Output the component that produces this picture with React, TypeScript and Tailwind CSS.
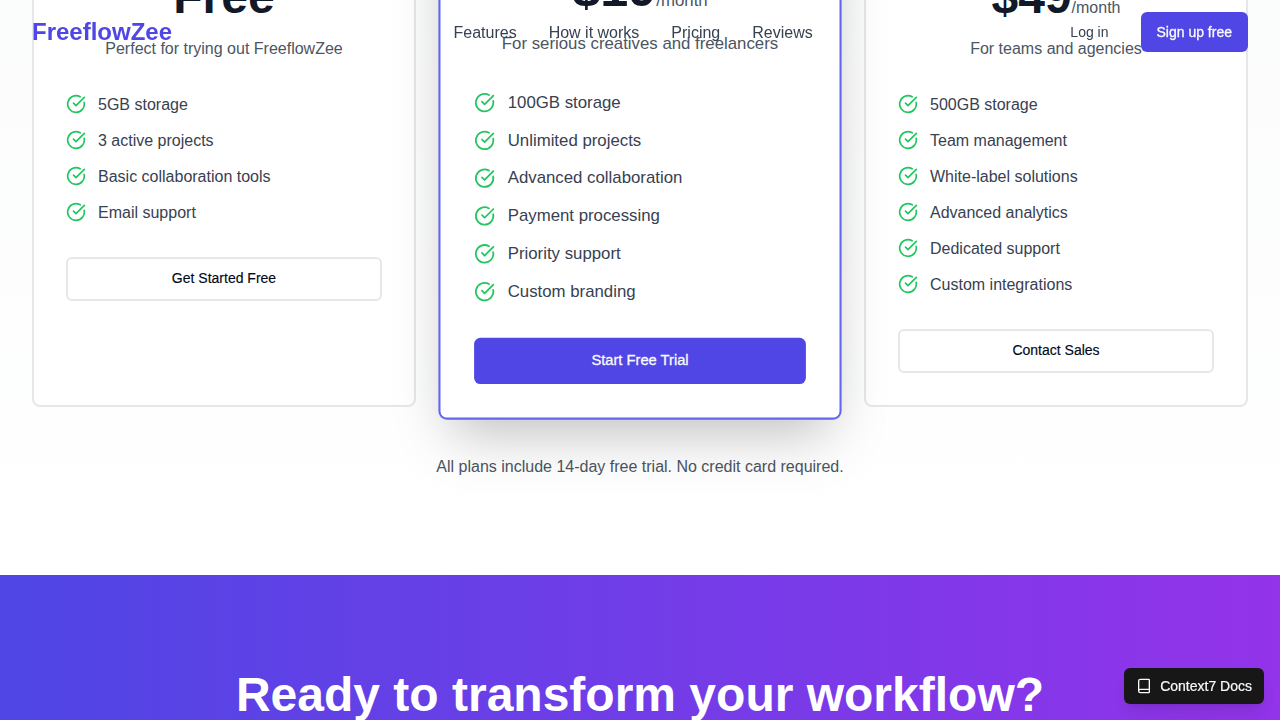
import React from "react";

type Plan = {
  name: string;
  price: string;
  period?: string;
  description: string;
  features: string[];
  cta: string;
  popular?: boolean;
};

const plans: Plan[] = [
  {
    name: "Starter",
    price: "Free",
    description: "Perfect for trying out FreeflowZee",
    features: ["5GB storage", "3 active projects", "Basic collaboration tools", "Email support"],
    cta: "Get Started Free",
  },
  {
    name: "Professional",
    price: "$19",
    period: "/month",
    description: "For serious creatives and freelancers",
    features: [
      "100GB storage",
      "Unlimited projects",
      "Advanced collaboration",
      "Payment processing",
      "Priority support",
      "Custom branding",
    ],
    cta: "Start Free Trial",
    popular: true,
  },
  {
    name: "Agency",
    price: "$49",
    period: "/month",
    description: "For teams and agencies",
    features: [
      "500GB storage",
      "Team management",
      "White-label solutions",
      "Advanced analytics",
      "Dedicated support",
      "Custom integrations",
    ],
    cta: "Contact Sales",
  },
];

function CheckIcon() {
  return (
    <svg
      className="mr-3 mb-px h-5 w-5 shrink-0 text-[#22c55e]"
      viewBox="0 0 24 24"
      fill="none"
      stroke="currentColor"
      strokeWidth="2"
      strokeLinecap="round"
      strokeLinejoin="round"
    >
      <path d="M21.801 10A10 10 0 1 1 17 3.335" />
      <path d="m9 11 3 3L22 4" />
    </svg>
  );
}

function BookIcon() {
  return (
    <svg
      className="h-4 w-4 shrink-0"
      viewBox="0 0 24 24"
      fill="none"
      stroke="currentColor"
      strokeWidth="2"
      strokeLinecap="round"
      strokeLinejoin="round"
    >
      <path d="M4 19.5v-15A2.5 2.5 0 0 1 6.5 2H19a1 1 0 0 1 1 1v18a1 1 0 0 1-1 1H6.5a1 1 0 0 1 0-5H20" />
    </svg>
  );
}

function PlanCard({ plan }: { plan: Plan }) {
  return (
    <div
      className={
        plan.popular
          ? "z-10 scale-105 rounded-lg border-2 border-[#6366f1] bg-white p-8 shadow-2xl"
          : "rounded-lg border-2 border-[#e5e7eb] bg-white p-8"
      }
    >
      <div className="text-center">
        <h3 className="text-2xl leading-none font-semibold text-[#111827]">{plan.name}</h3>
        <div className="mt-4 h-12 text-5xl leading-none font-bold text-[#111827]">
          {plan.price}
          {plan.period && <span className="text-base leading-none font-normal text-[#4b5563]">{plan.period}</span>}
        </div>
        <p className="mt-4 text-base text-[#4b5563]">{plan.description}</p>
      </div>
      <ul className="mt-8 space-y-3">
        {plan.features.map((feature) => (
          <li key={feature} className="flex items-center text-base text-[#374151]">
            <CheckIcon />
            {feature}
          </li>
        ))}
      </ul>
      <button
        className={
          plan.popular
            ? "mt-[31.5px] h-11 w-full rounded-md bg-[#4f46e5] pb-0.5 text-sm font-medium text-[#f8fafc] [-webkit-text-stroke:0.3px]"
            : "mt-8 h-11 w-full rounded-md border-2 border-[#e5e7eb] bg-white pb-0.5 text-sm font-medium text-[#020817] [-webkit-text-stroke:0.15px]"
        }
      >
        {plan.cta}
      </button>
    </div>
  );
}

function Header() {
  return (
    <header className="fixed inset-x-0 top-0 z-20 flex h-16 items-center px-8">
      <span className="w-[140px] text-2xl font-bold text-[#4f46e5]">FreeflowZee</span>
      <nav className="ml-[281.5px] flex gap-8 pt-0.5 text-base text-[#374151]">
        <a>Features</a>
        <a>How it works</a>
        <a>Pricing</a>
        <a>Reviews</a>
      </nav>
      <div className="ml-auto flex items-center gap-4">
        <button className="h-10 px-4 text-sm font-medium text-[#374151]">Log in</button>
        <button className="h-10 rounded-md bg-[#4f46e5] px-4 text-sm font-medium text-[#f8fafc] [-webkit-text-stroke:0.3px]">
          Sign up free
        </button>
      </div>
    </header>
  );
}

export default function App() {
  return (
    <div className="h-screen overflow-hidden bg-white font-['Liberation_Sans',Arial,sans-serif] antialiased">
      <Header />
      <main className="flow-root">
        <section className="-mt-[401.5px] h-[976px] bg-[linear-gradient(to_bottom,#f9fafb,#ffffff)] px-8 pt-[300px]">
          <div className="grid h-[508px] grid-cols-3 gap-8">
            {plans.map((plan) => (
              <PlanCard key={plan.name} plan={plan} />
            ))}
          </div>
          <p className="mt-12 text-center text-base text-[#4b5563]">
            All plans include 14-day free trial. No credit card required.
          </p>
        </section>
        <section className="h-[400px] bg-[linear-gradient(to_right,#4f46e5,#9333ea)] pt-24 text-center">
          <h2 className="text-5xl leading-none font-bold text-white">Ready to transform your workflow?</h2>
        </section>
      </main>
      <button className="fixed right-4 bottom-4 z-20 flex h-9 items-center gap-2 rounded-md bg-[#171717] px-3 text-sm font-medium text-[#fafafa] shadow-lg [-webkit-text-stroke:0.2px]">
        <BookIcon />
        Context7 Docs
      </button>
    </div>
  );
}
